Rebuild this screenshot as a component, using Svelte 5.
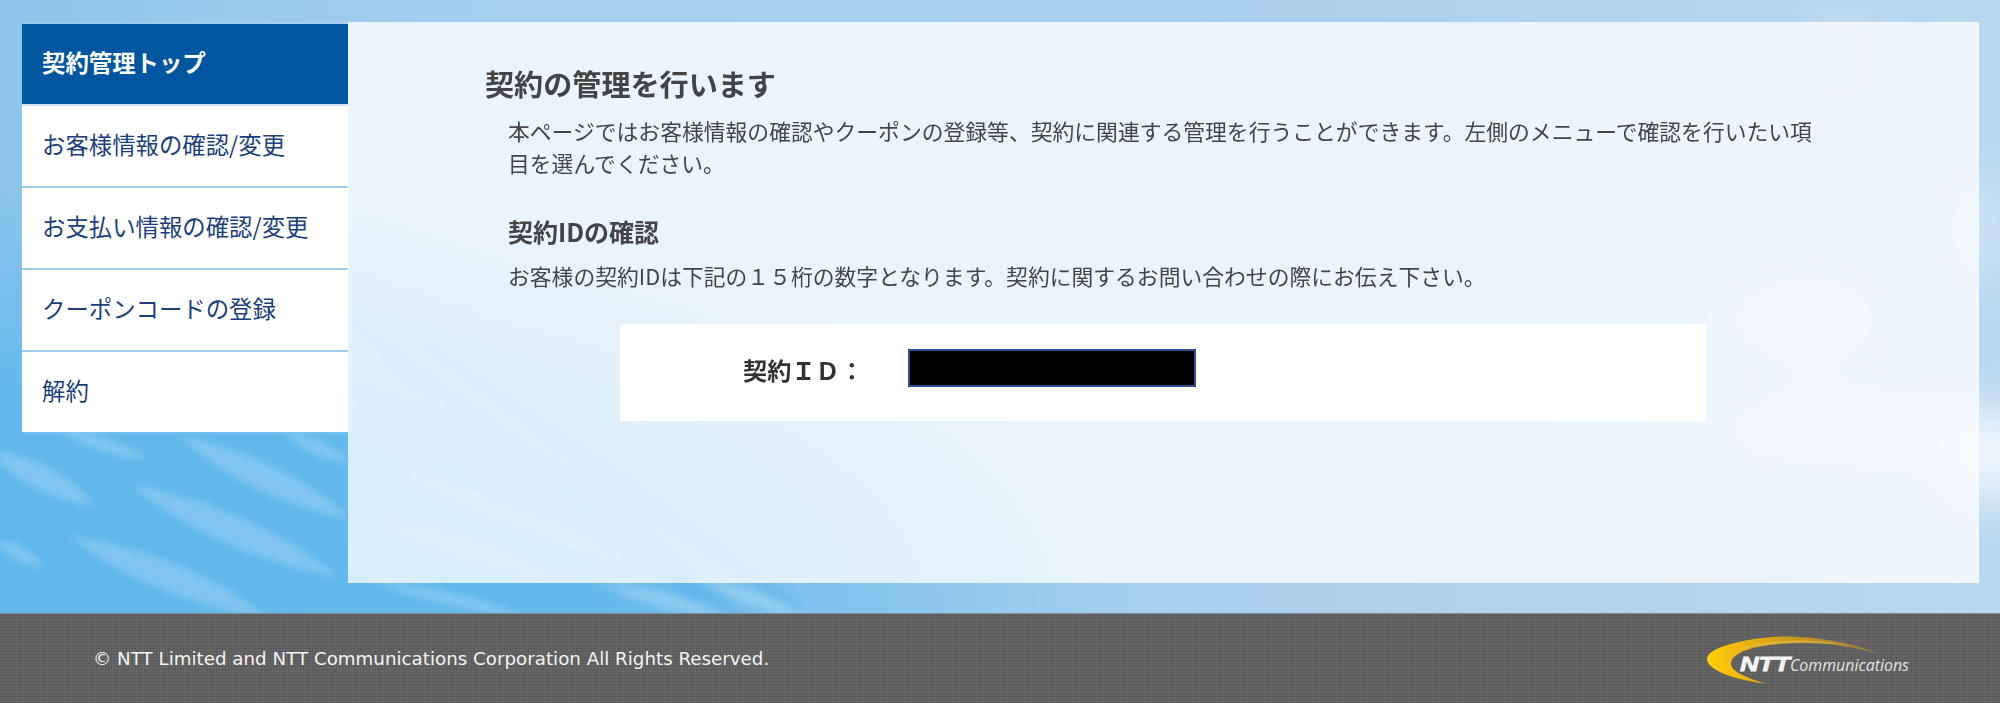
<script>
  const menu = [
    { label: '契約管理トップ', active: true },
    { label: 'お客様情報の確認/変更' },
    { label: 'お支払い情報の確認/変更' },
    { label: 'クーポンコードの登録' },
    { label: '解約' }
  ];

  // light streaks in the sky picture: x1, y1, x2, y2, belly
  const wisps = [
    [60, 430, 150, 460, 10],
    [-10, 450, 95, 506, 18],
    [130, 484, 340, 578, 22],
    [180, 436, 352, 520, 20],
    [70, 536, 268, 618, 22],
    [-5, 540, 45, 568, 10],
    [285, 432, 352, 464, 10],
    [370, 580, 530, 618, 10],
    [590, 580, 730, 618, 12],
    [700, 580, 810, 618, 10],
    [400, 470, 620, 560, 14],
    [380, 520, 560, 580, 14]
  ];

  const streaks = [
    [350, 320, 700, 600],
    [380, 350, 740, 620],
    [360, 400, 620, 590],
    [420, 340, 800, 610]
  ];

  const lens = ([x1, y1, x2, y2, b]) => {
    const mx = (x1 + x2) / 2;
    const my = (y1 + y2) / 2;
    return `M${x1} ${y1}Q${mx + b} ${my - b} ${x2} ${y2}Q${mx - b} ${my + b} ${x1} ${y1}Z`;
  };
</script>

<div class="page">
  <div class="main">
    <svg class="sky" viewBox="0 0 2000 613" width="2000" height="613" aria-hidden="true">
      <defs>
        <filter id="soft"><feGaussianBlur stdDeviation="3.5" /></filter>
        <filter id="softer"><feGaussianBlur stdDeviation="5" /></filter>
        <filter id="cloud"><feGaussianBlur stdDeviation="24" /></filter>
      </defs>
      {#each streaks as s}
        <line x1={s[0]} y1={s[1]} x2={s[2]} y2={s[3]} stroke="#3fa3ea" stroke-width="9" opacity="0.3" filter="url(#softer)" />
      {/each}
      {#each wisps as w}
        <path d={lens(w)} fill="#fff" opacity="0.2" filter="url(#soft)" />
      {/each}
      <g fill="#fff" filter="url(#cloud)">
        <ellipse cx="1880" cy="430" rx="170" ry="32" opacity="0.45" />
        <ellipse cx="1990" cy="460" rx="50" ry="45" opacity="0.7" />
        <ellipse cx="1800" cy="320" rx="90" ry="60" opacity="0.25" />
        <ellipse cx="1840" cy="60" rx="40" ry="50" opacity="0.2" />
        <ellipse cx="1980" cy="230" rx="30" ry="60" opacity="0.3" />
      </g>
    </svg>

    <ul class="side">
      {#each menu as item}
        <li class:active={item.active}>{item.label}</li>
      {/each}
    </ul>

    <section class="panel">
      <h1>契約の管理を行います</h1>
      <div class="body">
        <p class="lead">本ページではお客様情報の確認やクーポンの登録等、契約に関連する管理を行うことができます。左側のメニューで確認を行いたい項目を選んでください。</p>
        <h2>契約IDの確認</h2>
        <p class="note">お客様の契約IDは下記の１５桁の数字となります。契約に関するお問い合わせの際にお伝え下さい。</p>
      </div>
      <div class="idbox">
        <span class="idlabel">契約ＩＤ：</span>
        <span class="idvalue"></span>
      </div>
    </section>
  </div>

  <footer>
    <span class="copy">© NTT Limited and NTT Communications Corporation All Rights Reserved.</span>
    <svg class="logo" viewBox="0 0 230 60" width="230" height="60" role="img" aria-label="NTT Communications">
      <defs>
        <linearGradient id="swoosh" gradientUnits="userSpaceOnUse" x1="7" y1="40" x2="178" y2="15">
          <stop offset="0" stop-color="#ffd20a" />
          <stop offset="0.18" stop-color="#f2b90c" />
          <stop offset="0.55" stop-color="#c8951a" />
          <stop offset="1" stop-color="#8f7a45" />
        </linearGradient>
      </defs>
      <path d="M178 25C150 12 105 6 72 8C36 11 7 20 7 30C7 42 40 52 68 55C50 50 30 43 31 34C32 22 60 15 92 14C125 13 155 18 178 25Z" fill="url(#swoosh)" />
      <path d="M150 17C120 10 80 10 55 15C35 19 20 25 18 32C20 26 38 20 60 17C90 13 125 13 150 17Z" fill="#e8c04a" opacity="0.55" />
      <text x="40" y="42" class="ntt" textLength="50" lengthAdjust="spacingAndGlyphs">NTT</text>
      <text x="90" y="42" class="comm" textLength="119" lengthAdjust="spacingAndGlyphs">Communications</text>
    </svg>
  </footer>
</div>

<style>
  :global(body) {
    margin: 0;
  }

  .page {
    display: flex;
    flex-direction: column;
    width: 2000px;
    height: 703px;
    overflow: hidden;
    font-family: "Noto Sans CJK JP", "Open Sans", sans-serif;
    color: #444;
  }

  .main {
    position: relative;
    display: flex;
    align-items: flex-start;
    box-sizing: border-box;
    height: 613px;
    padding: 22px 21px 30px 22px;
    background:
      radial-gradient(ellipse 1150px 430px at 0 613px, #5fb7ec 0%, #63b9ec 50%, rgba(99, 185, 236, 0) 100%),
      linear-gradient(90deg, #8cc5ec 0%, #a6cfef 25%, #a8cfee 60%, #b9d8f0 100%);
  }

  .sky {
    position: absolute;
    top: 0;
    left: 0;
  }

  .side {
    position: relative;
    flex: none;
    width: 326px;
    margin: 2px 0 0;
    padding: 0;
    list-style: none;
    box-shadow: 2px 0 4px rgba(255, 255, 255, 0.3);
  }

  .side li {
    box-sizing: border-box;
    height: 82px;
    padding: 0 20px;
    line-height: 76px;
    font-size: 23.4px;
    color: #1c3f7e;
    background: #fff;
    border-bottom: 2px solid #9ccdef;
  }

  .side li:last-child {
    height: 80px;
    border-bottom: 0;
  }

  .side li.active {
    color: #fff;
    font-weight: 700;
    background: #00569f;
    border-bottom-color: #cfe5f6;
  }

  .panel {
    position: relative;
    flex: 1;
    box-sizing: border-box;
    height: 561px;
    padding: 41px 137px 0;
    background: rgba(255, 255, 255, 0.76);
  }

  h1 {
    margin: 0;
    font-size: 29.1px;
    line-height: 40px;
    font-weight: 700;
  }

  .body {
    padding: 0 20px 0 23px;
    font-size: 21.8px;
  }

  p {
    margin: 0;
  }

  .lead {
    margin-top: 12px;
    line-height: 32px;
  }

  h2 {
    margin: 34px 0 0;
    font-size: 25px;
    line-height: 36px;
    font-weight: 700;
  }

  .note {
    margin-top: 11px;
    line-height: 32px;
  }

  .idbox {
    display: flex;
    align-items: flex-start;
    box-sizing: border-box;
    width: 1086px;
    height: 97px;
    margin: 32px 0 0 135px;
    padding: 25px 0 0 123px;
    background: #fff;
  }

  .idlabel {
    width: 165px;
    font-size: 24.2px;
    font-weight: 700;
    line-height: 42px;
    color: #333;
  }

  .idvalue {
    box-sizing: border-box;
    width: 288px;
    height: 38px;
    background: #000;
    border: 2px solid #2b5190;
  }

  footer {
    display: flex;
    align-items: center;
    justify-content: space-between;
    box-sizing: border-box;
    height: 90px;
    padding: 0 70px 0 93px;
    color: #fff;
    background-color: #666;
    background-image:
      repeating-linear-gradient(0deg, rgba(0, 0, 0, 0.08) 0 1px, transparent 1px 3px),
      repeating-linear-gradient(90deg, rgba(0, 0, 0, 0.08) 0 1px, transparent 1px 3px);
    border-top: 1px solid #7f8c96;
  }

  .copy {
    font-family: "DejaVu Sans", sans-serif;
    font-size: 18.25px;
    color: #f4f4f4;
  }

  .logo {
    flex: none;
  }

  .ntt {
    font-family: "Liberation Sans", sans-serif;
    font-size: 20px;
    font-weight: 700;
    font-style: italic;
    fill: #f4f4f4;
    stroke: #f4f4f4;
    stroke-width: 0.8px;
  }

  .comm {
    font-family: "Open Sans", sans-serif;
    font-size: 17px;
    font-style: italic;
    fill: #e4e4e4;
  }
</style>
